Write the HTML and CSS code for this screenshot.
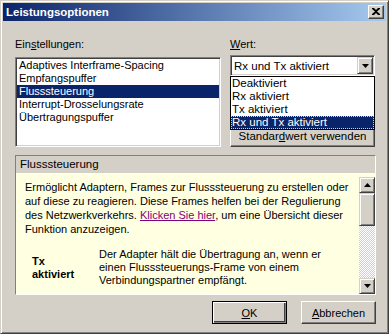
FILE: index.html
```html
<!DOCTYPE html>
<html>
<head>
<meta charset="utf-8">
<link rel="stylesheet" href="styles.css">
</head>
<body>
<div class="window">
  <div class="titlebar">
    <span class="title">Leistungsoptionen</span>
    <span class="close"><svg width="8" height="7" viewBox="0 0 8 7"><path d="M0 0h2l2 2 2-2h2v1L5 3.5 8 6v1H6L4 5 2 7H0V6l3-2.5L0 1z" fill="#000"/></svg></span>
  </div>
  <div class="body">
    <div class="top">
      <div class="col-left">
        <div class="label">Ein<u>s</u>tellungen:</div>
        <div class="listbox">
          <div class="item">Adaptives Interframe-Spacing</div>
          <div class="item">Empfangspuffer</div>
          <div class="item selected">Flusssteuerung</div>
          <div class="item">Interrupt-Drosselungsrate</div>
          <div class="item">Übertragungspuffer</div>
        </div>
      </div>
      <div class="col-right">
        <div class="label"><u>W</u>ert:</div>
        <div class="combo-wrap">
          <div class="combo">
            <span class="combo-value">Rx und Tx aktiviert</span>
            <span class="combo-btn"><svg width="7" height="4" viewBox="0 0 7 4"><path d="M0 0h7L3.5 4z" fill="#000"/></svg></span>
          </div>
          <div class="dropdown">
            <div class="opt">Deaktiviert</div>
            <div class="opt">Rx aktiviert</div>
            <div class="opt">Tx aktiviert</div>
            <div class="opt selected"><span class="focus">Rx und Tx aktiviert</span></div>
          </div>
        </div>
        <div class="btn std">Standar<u>d</u>wert verwenden</div>
      </div>
    </div>
    <div class="panel">
      <div class="panel-head">Flusssteuerung</div>
      <div class="panel-body">
        <div class="panel-content">
          <p class="help">Ermöglicht Adaptern, Frames zur Flusssteuerung zu erstellen oder auf diese zu reagieren. Diese Frames helfen bei der Regulierung des Netzwerkverkehrs. <span class="link">Klicken Sie hier</span>, um eine Übersicht dieser Funktion anzuzeigen.</p>
          <div class="row">
            <div class="term">Tx aktiviert</div>
            <div class="desc">Der Adapter hält die Übertragung an, wenn er einen Flusssteuerungs-Frame von einem Verbindungspartner empfängt.</div>
          </div>
        </div>
        <div class="scrollbar">
          <div class="sb-btn"><svg width="7" height="4" viewBox="0 0 7 4"><path d="M3.5 0L7 4H0z" fill="#000"/></svg></div>
          <div class="sb-thumb"></div>
          <div class="sb-track"></div>
          <div class="sb-btn"><svg width="7" height="4" viewBox="0 0 7 4"><path d="M0 0h7L3.5 4z" fill="#000"/></svg></div>
        </div>
      </div>
    </div>
    <div class="buttons">
      <div class="btn default"><u>O</u>K</div>
      <div class="btn cancel"><u>A</u>bbrechen</div>
    </div>
  </div>
</div>
</body>
</html>
```

FILE: styles.css
```css
* { box-sizing: border-box; }
body {
  margin: 0;
  font-family: "Liberation Sans", Arial, sans-serif;
  font-size: 11px;
  color: #000;
}
.window {
  width: 389px;
  height: 334px;
  background: #d4d0c8;
  border: 1px solid;
  border-color: #d4d0c8 #404040 #404040 #d4d0c8;
  box-shadow: inset 1px 1px #fff, inset -1px -1px #808080;
  padding: 2px;
  display: flex;
  flex-direction: column;
}
.titlebar {
  height: 18px;
  flex: none;
  background: linear-gradient(to right, #0a246a, #a6caf0);
  display: flex;
  align-items: center;
  padding: 0 2px 0 2px;
}
.title {
  flex: 1;
  color: #fff;
  font-weight: bold;
  font-size: 11.5px;
  padding-left: 1px;
}
.close {
  width: 16px;
  height: 14px;
  background: #d4d0c8;
  border: 1px solid;
  border-color: #fff #404040 #404040 #fff;
  box-shadow: inset -1px -1px #808080;
  display: flex;
  align-items: center;
  justify-content: center;
  padding-bottom: 1px;
}
.close svg { display: block; }
.body {
  flex: 1;
  padding: 17px 10px 0 12px;
  display: flex;
  flex-direction: column;
}
.top {
  display: flex;
  gap: 9px;
}
.col-left { width: 206px; }
.col-right { width: 145px; display: flex; flex-direction: column; }
.label {
  height: 13px;
  line-height: 13px;
}
.listbox, .combo {
  background: #fff;
  border: 1px solid;
  border-color: #808080 #fff #fff #808080;
  box-shadow: inset 1px 1px #404040, inset -1px -1px #d4d0c8;
  padding: 1px;
}
.listbox {
  margin-top: 6px;
  height: 90px;
}
.item {
  height: 13px;
  line-height: 13px;
  padding-left: 2px;
  white-space: nowrap;
}
.item.selected {
  background: #0a246a;
  color: #fff;
}
.combo-wrap {
  position: relative;
  margin-top: 4px;
}
.combo {
  height: 21px;
  display: flex;
  align-items: center;
}
.combo-value {
  flex: 1;
  padding-left: 2px;
  font-size: 11.5px;
}
.combo-btn {
  width: 16px;
  height: 17px;
  background: #d4d0c8;
  border: 1px solid;
  border-color: #d4d0c8 #404040 #404040 #d4d0c8;
  box-shadow: inset 1px 1px #fff, inset -1px -1px #808080;
  display: flex;
  align-items: center;
  justify-content: center;
}
.combo-btn svg, .sb-btn svg { display: block; }
.dropdown {
  position: absolute;
  top: 100%;
  left: 0;
  width: 145px;
  height: 54px;
  background: #fff;
  border: 1px solid #000;
  z-index: 2;
  font-size: 11.5px;
}
.opt {
  height: 13px;
  line-height: 13px;
  padding-left: 1px;
  white-space: nowrap;
}
.opt.selected {
  background: #0a246a;
  color: #fff;
  outline: 1px dotted #d4d0c8;
  outline-offset: -1px;
}
.btn {
  background: #d4d0c8;
  border: 1px solid;
  border-color: #fff #404040 #404040 #fff;
  box-shadow: inset -1px -1px #808080;
  height: 23px;
  display: flex;
  align-items: center;
  justify-content: center;
  white-space: nowrap;
}
.std {
  margin-top: 48px;
  font-size: 11.5px;
}
.panel {
  margin-top: 8px;
  width: 361px;
  height: 140px;
  border: 1px solid;
  border-color: #808080 #fff #fff #808080;
  display: flex;
  flex-direction: column;
}
.panel-head {
  height: 18px;
  line-height: 16px;
  padding-left: 4px;
  border-bottom: 1px solid #fff;
  font-size: 11.5px;
  flex: none;
}
.panel-body {
  flex: 1;
  background: #ffffe1;
  display: flex;
  min-height: 0;
}
.panel-content {
  flex: 1;
  overflow: hidden;
  padding: 6px 6px 0 9px;
}
.help {
  margin: 0;
  line-height: 14px;
}
.link {
  color: #800080;
  text-decoration: underline;
}
.row {
  display: flex;
  align-items: center;
  margin-top: 12px;
}
.term {
  width: 74px;
  padding-left: 7px;
  padding-right: 12px;
  font-weight: bold;
  line-height: 13px;
}
.desc {
  flex: 1;
  line-height: 13px;
  padding-right: 14px;
}
.scrollbar {
  width: 16px;
  margin-top: 3px;
  display: flex;
  flex-direction: column;
}
.sb-btn, .sb-thumb {
  background: #d4d0c8;
  border: 1px solid;
  border-color: #d4d0c8 #404040 #404040 #d4d0c8;
  box-shadow: inset 1px 1px #fff, inset -1px -1px #808080;
}
.sb-btn {
  height: 16px;
  display: flex;
  align-items: center;
  justify-content: center;
  flex: none;
}
.sb-thumb {
  height: 33px;
  flex: none;
}
.sb-track {
  flex: 1;
  background-image: conic-gradient(#fff 25%, #d4d0c8 0 50%, #fff 0 75%, #d4d0c8 0);
  background-size: 2px 2px;
}
.buttons {
  display: flex;
  justify-content: flex-end;
  gap: 14px;
  margin-top: 6px;
}
.buttons .btn {
  width: 75px;
}
.btn.default {
  border: 1px solid #000;
  box-shadow: inset 1px 1px #fff, inset -1px -1px #808080, inset -2px -2px #404040;
}
```
